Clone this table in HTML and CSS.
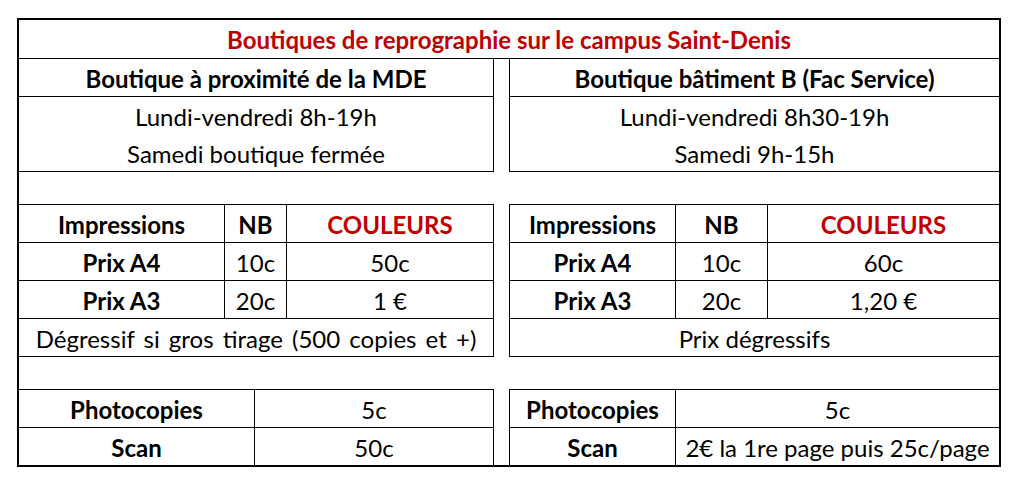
FILE: index.html
```html
<!DOCTYPE html>
<html lang="fr">
<head>
<meta charset="utf-8">
<title>Boutiques de reprographie</title>
<link rel="stylesheet" href="styles.css">
</head>
<body>
<div class="sheet">
  <div class="title">Boutiques de reprographie sur le campus Saint-Denis</div>
  <div class="cols">
    <div class="col col-left">
      <div class="block">
        <div class="cell head">Boutique à proximité de la MDE</div>
        <div class="hours">
          <div class="line">Lundi-vendredi 8h-19h</div>
          <div class="line">Samedi boutique fermée</div>
        </div>
      </div>
      <div class="spacer"></div>
      <div class="ptable">
        <div class="cell b">Impressions</div>
        <div class="cell b">NB</div>
        <div class="cell b red">COULEURS</div>
        <div class="cell b">Prix A4</div>
        <div class="cell">10c</div>
        <div class="cell">50c</div>
        <div class="cell b">Prix A3</div>
        <div class="cell">20c</div>
        <div class="cell">1 €</div>
        <div class="cell span wide">Dégressif si gros tirage (500 copies et +)</div>
      </div>
      <div class="spacer"></div>
      <div class="ctable">
        <div class="cell b">Photocopies</div>
        <div class="cell">5c</div>
        <div class="cell b">Scan</div>
        <div class="cell">50c</div>
      </div>
    </div>
    <div class="col col-right">
      <div class="block">
        <div class="cell head">Boutique bâtiment B (Fac Service)</div>
        <div class="hours">
          <div class="line">Lundi-vendredi 8h30-19h</div>
          <div class="line">Samedi 9h-15h</div>
        </div>
      </div>
      <div class="spacer"></div>
      <div class="ptable">
        <div class="cell b">Impressions</div>
        <div class="cell b">NB</div>
        <div class="cell b red">COULEURS</div>
        <div class="cell b">Prix A4</div>
        <div class="cell">10c</div>
        <div class="cell">60c</div>
        <div class="cell b">Prix A3</div>
        <div class="cell">20c</div>
        <div class="cell">1,20 €</div>
        <div class="cell span">Prix dégressifs</div>
      </div>
      <div class="spacer"></div>
      <div class="ctable">
        <div class="cell b">Photocopies</div>
        <div class="cell">5c</div>
        <div class="cell b">Scan</div>
        <div class="cell">2€ la 1re page puis 25c/page</div>
      </div>
    </div>
  </div>
</div>
</body>
</html>
```

FILE: styles.css
```css
html, body {
  margin: 0;
  padding: 0;
  background: #fff;
}
body {
  font-family: Lato, "Liberation Sans", sans-serif;
  font-size: 24px;
  color: #000;
  padding: 18px 0 0 17px;
}
.sheet {
  width: 980px;
  border: 2px solid #000;
}
.title {
  height: 38px;
  line-height: 40px;
  border-bottom: 1px solid #000;
  text-align: center;
  color: #c00000;
  font-weight: bold;
  white-space: nowrap;
}
.cols {
  display: grid;
  grid-template-columns: 475px 490px;
  column-gap: 15px;
}
.cell {
  height: 37px;
  line-height: 40px;
  text-align: center;
  white-space: nowrap;
  overflow: hidden;
  border-bottom: 1px solid #000;
}
.b { font-weight: bold; }
.red { color: #c00000; }
.head { font-weight: bold; }
.hours {
  height: 74px;
  border-bottom: 1px solid #000;
}
.hours .line {
  height: 37px;
  line-height: 40px;
  text-align: center;
  white-space: nowrap;
}
.spacer {
  height: 32px;
}
.ptable, .ctable {
  display: grid;
  border-top: 1px solid #000;
}
.span { grid-column: 1 / -1; }
.wide { word-spacing: 3px; }

/* left column: right border only */
.col-left .block,
.col-left .ptable,
.col-left .ctable {
  border-right: 1px solid #000;
}
.col-left .ptable { grid-template-columns: 206px 62px 1fr; }
.col-left .ptable .cell:nth-child(3n+1):not(.span),
.col-left .ptable .cell:nth-child(3n+2) { border-right: 1px solid #000; }
.col-left .ctable { grid-template-columns: 236px 1fr; }
.col-left .ctable .cell:nth-child(odd) { border-right: 1px solid #000; }

/* right column: left border only */
.col-right .block,
.col-right .ptable,
.col-right .ctable {
  border-left: 1px solid #000;
}
.col-right .ptable { grid-template-columns: 166px 92px 1fr; }
.col-right .ptable .cell:nth-child(3n+1):not(.span),
.col-right .ptable .cell:nth-child(3n+2) { border-right: 1px solid #000; }
.col-right .ctable { grid-template-columns: 166px 1fr; }
.col-right .ctable .cell:nth-child(odd) { border-right: 1px solid #000; }

.ctable .cell:nth-last-child(-n+2) { border-bottom: none; }
```
